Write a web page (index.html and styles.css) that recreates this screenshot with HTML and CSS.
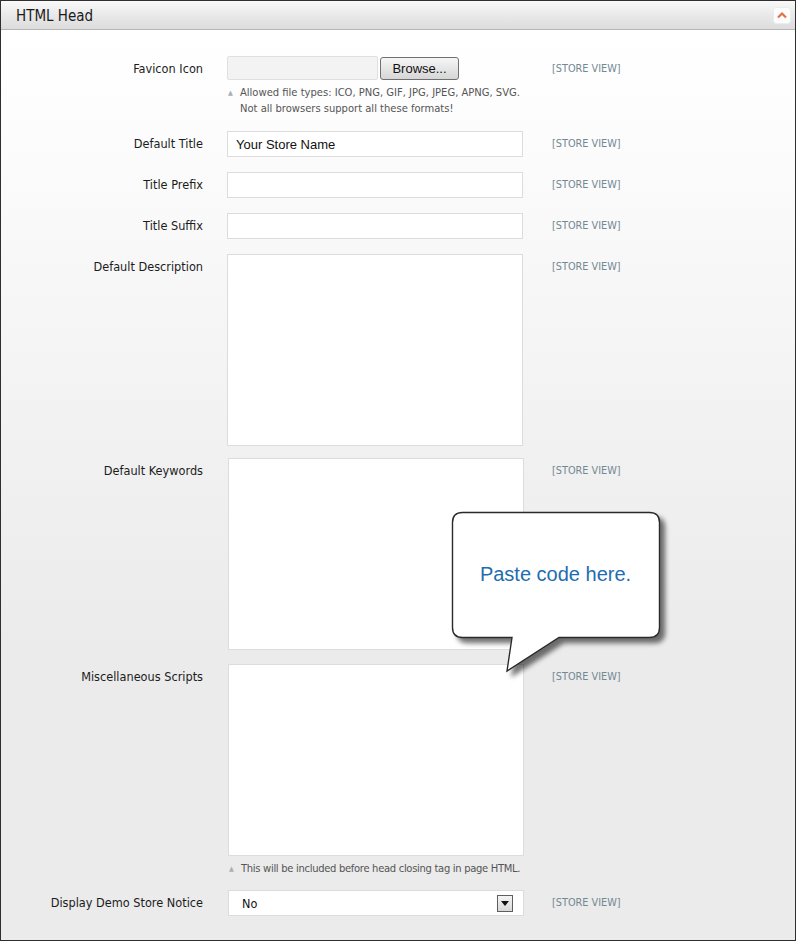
FILE: index.html
```html
<!DOCTYPE html>
<html>
<head>
<meta charset="utf-8">
<title>HTML Head</title>
<link rel="stylesheet" href="styles.css">
</head>
<body>
<div class="panel">
  <div class="panel-head">
    <span class="panel-title">HTML Head</span>
    <span class="collapse">
      <svg width="18" height="17" viewBox="0 0 18 17"><rect x="0.5" y="0.5" width="17" height="16" rx="3" fill="#fdfdfd" stroke="#ececec"/><path d="M5 10.5 L9 6.5 L13 10.5" fill="none" stroke="#e0714a" stroke-width="2.2"/></svg>
    </span>
  </div>
  <div class="panel-body">
    <div class="row row-favicon">
      <label class="lbl">Favicon Icon</label>
      <div class="field">
        <div class="file-wrap">
          <span class="file-box"></span>
          <span class="browse">Browse...</span>
        </div>
        <div class="hint"><span class="tri">▲</span>Allowed file types: ICO, PNG, GIF, JPG, JPEG, APNG, SVG.<br>Not all browsers support all these formats!</div>
      </div>
      <span class="scope">[STORE VIEW]</span>
    </div>
    <div class="row">
      <label class="lbl">Default Title</label>
      <div class="field"><div class="input">Your Store Name</div></div>
      <span class="scope">[STORE VIEW]</span>
    </div>
    <div class="row">
      <label class="lbl">Title Prefix</label>
      <div class="field"><div class="input"></div></div>
      <span class="scope">[STORE VIEW]</span>
    </div>
    <div class="row">
      <label class="lbl">Title Suffix</label>
      <div class="field"><div class="input"></div></div>
      <span class="scope">[STORE VIEW]</span>
    </div>
    <div class="row row-desc">
      <label class="lbl">Default Description</label>
      <div class="field"><div class="textarea"></div></div>
      <span class="scope">[STORE VIEW]</span>
    </div>
    <div class="row row-keys shifted">
      <label class="lbl">Default Keywords</label>
      <div class="field"><div class="textarea"></div></div>
      <span class="scope">[STORE VIEW]</span>
    </div>
    <div class="row row-misc shifted">
      <label class="lbl">Miscellaneous Scripts</label>
      <div class="field">
        <div class="textarea"></div>
        <div class="hint hint-narrow"><span class="tri">▲</span>This will be included before head closing tag in page HTML.</div>
      </div>
      <span class="scope">[STORE VIEW]</span>
    </div>
    <div class="row shifted">
      <label class="lbl">Display Demo Store Notice</label>
      <div class="field">
        <div class="select">No
          <span class="sel-btn"><svg width="8" height="5" viewBox="0 0 8 5"><path d="M0 0 H8 L4 5 Z" fill="#111"/></svg></span>
        </div>
      </div>
      <span class="scope">[STORE VIEW]</span>
    </div>
  </div>

  <div class="callout">
    <svg class="callout-shape" width="240" height="190" viewBox="0 0 240 190">
      <defs>
        <filter id="sh" x="-10%" y="-10%" width="130%" height="130%">
          <feGaussianBlur in="SourceAlpha" stdDeviation="2.5"/>
          <feOffset dx="5" dy="5" result="b"/>
          <feComponentTransfer><feFuncA type="linear" slope="0.55"/></feComponentTransfer>
          <feMerge><feMergeNode/><feMergeNode in="SourceGraphic"/></feMerge>
        </filter>
      </defs>
      <path filter="url(#sh)" d="M17.5 6.5 H204.5 Q214.5 6.5 214.5 16.5 V121.5 Q214.5 131.5 204.5 131.5 H114 L62 165 L67 131.5 H17.5 Q7.5 131.5 7.5 121.5 V16.5 Q7.5 6.5 17.5 6.5 Z" fill="#ffffff" stroke="#2b2b2b" stroke-width="1.4"/>
    </svg>
    <div class="callout-text">Paste code here.</div>
  </div>
</div>
</body>
</html>
```

FILE: styles.css
```css
html, body {
  margin: 0;
  padding: 0;
  background: #ffffff;
}

.panel {
  position: relative;
  width: 796px;
  height: 941px;
  box-sizing: border-box;
  border: 1px solid #2f2f2f;
  font-family: "DejaVu Sans Condensed", "DejaVu Sans", sans-serif;
  color: #1e1e1e;
  display: flex;
  flex-direction: column;
  overflow: hidden;
}

.panel-head {
  height: 28px;
  flex: none;
  display: flex;
  align-items: center;
  justify-content: space-between;
  padding: 0 4px 0 15px;
  background: linear-gradient(#f9f9f9, #e9e9e9 50%, #dcdcdc);
  border-bottom: 1px solid #b5b5b5;
}

.panel-title {
  font-size: 15px;
  color: #1a1a1a;
  padding-top: 1px;
}

.collapse {
  display: flex;
  margin-top: 1px;
}

.panel-body {
  flex: 1;
  padding-top: 26px;
  background: linear-gradient(#ffffff 0, #fdfdfd 80px, #f1f1f1 420px, #ebebeb 620px, #ebebeb 100%);
}

.row {
  display: flex;
  align-items: flex-start;
  margin-bottom: 15px;
}

.row-favicon { margin-bottom: 14px; }
.row-desc { margin-bottom: 12px; }
.row-keys { margin-bottom: 14px; }
.row-misc { margin-bottom: 13px; }

.lbl {
  width: 202px;
  flex: none;
  text-align: right;
  font-size: 12.6px;
  line-height: 15px;
  padding-top: 5px;
  color: #1c1c1c;
}

.field {
  width: 296px;
  flex: none;
  margin-left: 24px;
}

.shifted .field { margin-left: 25px; }
.shifted .scope { margin-left: 28px; }

.scope {
  margin-left: 29px;
  padding-top: 6px;
  font-size: 10.8px;
  line-height: 14px;
  color: #728893;
  white-space: nowrap;
}

.file-wrap {
  display: flex;
  align-items: flex-start;
  height: 24px;
}

.file-box {
  width: 151px;
  height: 24px;
  box-sizing: border-box;
  border: 1px solid #e0e0e0;
  background: #f3f3f3;
  border-radius: 2px;
}

.browse {
  margin-left: 2px;
  margin-top: 1px;
  width: 79px;
  height: 23px;
  box-sizing: border-box;
  border: 1px solid #707070;
  border-radius: 3px;
  background: linear-gradient(#f6f6f6, #e6e6e6 50%, #d6d6d6);
  font-family: "Liberation Sans", Arial, sans-serif;
  font-size: 13px;
  color: #111;
  display: flex;
  align-items: center;
  justify-content: center;
}

.hint {
  margin-top: 5px;
  font-size: 11.1px;
  line-height: 16px;
  color: #555;
  padding-left: 13px;
  position: relative;
  white-space: nowrap;
}

.hint-narrow {
  letter-spacing: -0.3px;
}

.tri {
  position: absolute;
  left: 1px;
  top: 0;
  font-size: 7px;
  color: #a8b0b3;
  letter-spacing: 0;
}

.input {
  height: 26px;
  box-sizing: border-box;
  border: 1px solid #dcdcdc;
  background: #fff;
  font-family: "Liberation Sans", Arial, sans-serif;
  font-size: 13px;
  line-height: 25px;
  padding-left: 8px;
  color: #111;
}

.textarea {
  height: 192px;
  box-sizing: border-box;
  border: 1px solid #dcdcdc;
  background: #fff;
}

.select {
  position: relative;
  height: 26px;
  box-sizing: border-box;
  border: 1px solid #dcdcdc;
  background: #fff;
  font-size: 12.5px;
  line-height: 25px;
  padding-left: 13px;
  color: #111;
}

.sel-btn {
  position: absolute;
  right: 10px;
  top: 4px;
  width: 16px;
  height: 17px;
  box-sizing: border-box;
  border: 1px solid #5e5e5e;
  background: linear-gradient(#f4f4f4, #d8d8d8);
  display: flex;
  align-items: center;
  justify-content: center;
}

.callout {
  position: absolute;
  left: 444px;
  top: 505px;
  width: 240px;
  height: 190px;
}

.callout-shape {
  position: absolute;
  left: 0;
  top: 0;
}

.callout-text {
  position: absolute;
  left: 8px;
  top: 6px;
  width: 207px;
  height: 125px;
  display: flex;
  align-items: center;
  justify-content: center;
  font-family: "Liberation Sans", Arial, sans-serif;
  font-size: 20px;
  color: #1d6db0;
  padding-right: 2px;
  box-sizing: border-box;
}
```
